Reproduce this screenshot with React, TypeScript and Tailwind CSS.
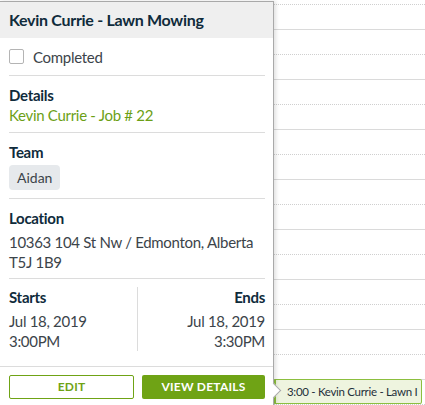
import React from 'react';

const font = { fontFamily: 'Lato, "Source Sans Pro", "Noto Sans", sans-serif' };

function CalendarGrid() {
    const rows = Array.from({ length: 16 }, (_, i) => i);
    return (
        <div className="w-full">
            <div className="h-[5px] border-b border-dotted border-[#cfcfcf]" />
            {rows.map((i) => (
                <div
                    key={i}
                    className={
                        i % 2 === 0
                            ? 'h-[25px] border-b border-solid border-[#dadada]'
                            : 'h-[25px] border-b border-dotted border-[#cfcfcf]'
                    }
                />
            ))}
        </div>
    );
}

function Divider() {
    return <div className="h-px bg-[#dcdcdc]" />;
}

export default function App() {
    return (
        <div className="relative w-[425px] h-[405px] overflow-hidden bg-white" style={font}>
            <CalendarGrid />

            {/* Event chip */}
            <div className="absolute left-[273px] top-[379px] w-[149px] h-[25px] flex items-center border border-[#8cbf3f] border-l-[3px] bg-[#eef4df] rounded-[2px] pl-[11px] overflow-hidden">
                <span className="text-[11.5px] tracking-[-0.3px] text-[#1f2f3a] whitespace-nowrap leading-none">
                    3:00 - Kevin Currie - Lawn I
                </span>
            </div>

            {/* Popover */}
            <div className="absolute left-[-1px] top-[1px] w-[275px] h-[430px] bg-white border border-[#a9a9a9] shadow-[2px_0_4px_rgba(0,0,0,0.12)] tracking-[-0.3px]">
                {/* Arrow */}
                <div className="absolute right-[-6px] top-[383px] w-[11px] h-[11px] rotate-45 bg-white border-t border-r border-[#a9a9a9]" />

                <div className="relative bg-[#efefef] h-[36px] flex items-center pl-[9px]">
                    <h2 className="text-[16px] font-bold text-[#0f2b3b]">Kevin Currie - Lawn Mowing</h2>
                </div>

                <div className="relative pl-[9px] pr-[8px] text-[15px] leading-[20px]">
                    <label className="flex items-center gap-[9px] h-[37px]">
                        <span className="w-[15px] h-[15px] border border-[#b4b4b4] rounded-[2px] bg-white" />
                        <span className="text-[#3c444a]">Completed</span>
                    </label>
                    <Divider />

                    <div className="pt-[9px] pb-[7px]">
                        <div className="font-bold text-[#0f2b3b]">Details</div>
                        <div className="text-[#6c9f16]">Kevin Currie - Job # 22</div>
                    </div>
                    <Divider />

                    <div className="pt-[9px] pb-[8px]">
                        <div className="font-bold text-[#0f2b3b]">Team</div>
                        <span className="inline-flex items-center mt-[3px] h-[25px] px-[8px] rounded-[4px] bg-[#e6e9ec] text-[14px] text-[#3c444a] tracking-normal">
                            Aidan
                        </span>
                    </div>
                    <Divider />

                    <div className="pt-[9px] pb-[6px]">
                        <div className="font-bold text-[#0f2b3b]">Location</div>
                        <div className="text-[#3c444a] mt-[4px]">
                            10363 104 St Nw / Edmonton, Alberta
                            <br />
                            T5J 1B9
                        </div>
                    </div>
                    <Divider />

                    <div className="flex pt-[8px] pb-[15px]">
                        <div className="flex-1">
                            <div className="font-bold text-[#0f2b3b]">Starts</div>
                            <div className="text-[#3c444a] mt-[4px]">Jul 18, 2019</div>
                            <div className="text-[#3c444a]">3:00PM</div>
                        </div>
                        <div className="w-px bg-[#dcdcdc]" />
                        <div className="flex-1 text-right">
                            <div className="font-bold text-[#0f2b3b]">Ends</div>
                            <div className="text-[#3c444a] mt-[4px]">Jul 18, 2019</div>
                            <div className="text-[#3c444a]">3:30PM</div>
                        </div>
                    </div>
                </div>

                <div className="relative h-px bg-[#dcdcdc]" />

                <div className="relative flex gap-[8px] pl-[9px] pr-[8px] pt-[8px]">
                    <button className="flex-1 h-[24px] border border-[#6fa315] rounded-[2px] text-[12px] font-bold tracking-[0.02em] text-[#6fa315]">
                        EDIT
                    </button>
                    <button className="flex-1 h-[24px] bg-[#6fa315] rounded-[2px] text-[12px] font-bold tracking-[0.02em] text-white">
                        VIEW DETAILS
                    </button>
                </div>
            </div>
        </div>
    );
}
